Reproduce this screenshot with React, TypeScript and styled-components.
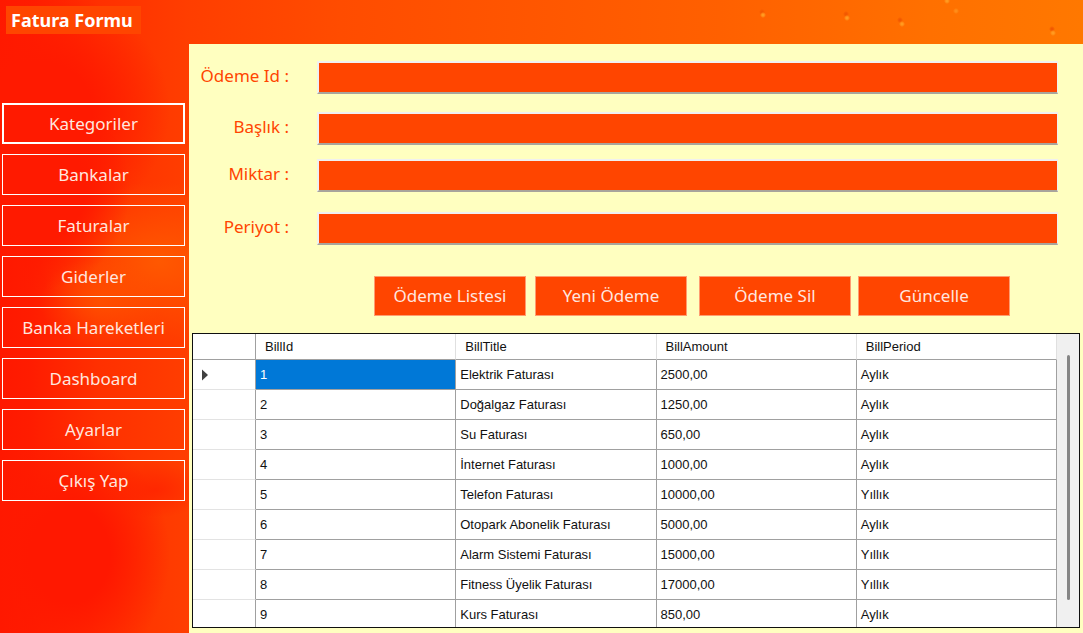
import React from 'react';
import styled, { createGlobalStyle } from 'styled-components';

const uiFont = '"Noto Sans", "Open Sans", sans-serif';

const GlobalStyle = createGlobalStyle`
  *, *::before, *::after { box-sizing: border-box; }
  body { margin: 0; font-family: ${uiFont}; }
`;

const Window = styled.div`
  height: 100vh;
  min-height: 480px;
  display: flex;
  flex-direction: column;
  overflow: hidden;
  background:
    radial-gradient(circle at 763px 15px, #ff9a20 0 1px, transparent 3px),
    radial-gradient(circle at 847px 18px, #ff9a20 0 1px, transparent 3px),
    radial-gradient(circle at 902px 24px, #ff9a20 0 1px, transparent 3px),
    radial-gradient(circle at 947px 1px, #ff9a20 0 1px, transparent 3px),
    radial-gradient(circle at 956px 11px, #ff8c18 0 1px, transparent 3px),
    radial-gradient(circle at 1053px 33px, #ff9a20 0 1px, transparent 3px),
    radial-gradient(circle at 762px 12px, #f25800 0 1px, transparent 3px),
    radial-gradient(circle at 846px 14px, #f25800 0 1px, transparent 3px),
    radial-gradient(circle at 900px 20px, #f25800 0 1px, transparent 3px),
    radial-gradient(circle at 1052px 29px, #f25800 0 1px, transparent 3px),
    radial-gradient(ellipse 50px 28px at 155px 490px, #ff1f00b0, #ff1f0000),
    radial-gradient(ellipse 100px 120px at 70px 555px, #ff1800 40%, #ff180000),
    radial-gradient(ellipse 90px 100px at 40px 190px, #ff1a00 50%, #ff1a0000),
    radial-gradient(ellipse 60px 45px at 100px 302px, #ff5600b0, #ff560000),
    radial-gradient(ellipse 120px 80px at 160px 262px, #ff5800, #ff580000),
    radial-gradient(ellipse 130px 120px at 40px 110px, #ff1a00 40%, #ff1a0000),
    linear-gradient(90deg, #ff1800 0, #ff1c00 30px, #ff3000 100px, #ff3e00 190px, #ff4c00 340px, #ff6000 720px, #ff7000 930px, #ff7800 1083px);
`;

const Header = styled.header`
  flex: none;
  height: 44px;
  padding: 6px;
`;

const Title = styled.h1`
  width: fit-content;
  margin: 0;
  padding: 0 8px 0 5px;
  background: #ff4500;
  color: #fff;
  font-size: 18px;
  line-height: 28px;
  font-weight: 700;
`;

const Body = styled.div`
  flex: 1;
  min-height: 0;
  display: flex;
`;

const Sidebar = styled.nav`
  flex: none;
  width: 189px;
  padding: 59px 4px 0 2px;
  display: flex;
  flex-direction: column;
  gap: 10px;
`;

const NavButton = styled.button<{ $active?: boolean }>`
  height: 41px;
  padding: 0;
  border: ${({ $active }) => ($active ? 2 : 1)}px solid #fff;
  background: transparent;
  color: #ffe6df;
  font: 17px/24px ${uiFont};
`;

const Panel = styled.main`
  flex: 1;
  min-width: 0;
  display: flex;
  flex-direction: column;
  padding: 17px 3px 5px;
  background: #ffffc0;
`;

const Form = styled.form`
  flex: none;
`;

const Fields = styled.div`
  display: grid;
  grid-template-columns: 97px 1fr;
  grid-template-rows: 51px 47px 53px 33px;
  column-gap: 28px;
  align-items: start;
  padding-right: 22px;
`;

const Label = styled.label`
  text-align: right;
  color: #ff4500;
  font-size: 17px;
  line-height: 30px;
`;

const Input = styled.input`
  width: 100%;
  height: 33px;
  padding: 4px 8px;
  border: 2px solid #f0f0f0;
  border-right-width: 1px;
  border-bottom: 2px solid #a8a49c;
  background: #ff4500;
  color: #fff;
  font: 17px/24px ${uiFont};
  outline: none;
`;

const Actions = styled.div`
  display: grid;
  grid-template-columns: 161px 164px 159px 152px;
  justify-content: end;
  padding: 31px 70px 0 0;
  margin-bottom: 17px;
`;

const ActionButton = styled.button`
  width: 152px;
  height: 40px;
  padding: 0;
  border: 1px solid #ff9c70;
  background: #ff4500;
  color: #ffe6df;
  font: 17px/24px ${uiFont};
`;

const Grid = styled.section`
  flex: 1;
  min-height: 0;
  display: flex;
  overflow: hidden;
  border: 1px solid #101010;
  background: #f0f0f0;
`;

const TableArea = styled.div`
  flex: 1;
  min-width: 0;
  overflow: hidden;
`;

const Table = styled.table`
  width: 100%;
  table-layout: fixed;
  border-collapse: separate;
  border-spacing: 0;
  background: #fff;
  color: #111;
  font: 13px/16px "Liberation Sans", Arial, sans-serif;
`;

const MarkerCol = styled.col`
  width: 63px;
`;

const HeadCell = styled.th`
  height: 26px;
  padding: 1px 9px 0;
  border-right: 1px solid #e0e0e0;
  border-bottom: 1px solid #a0a0a0;
  text-align: left;
  font-weight: 400;

  &:first-child { border-right-color: #a0a0a0; }
`;

const RowHead = styled.td`
  height: 30px;
  padding: 1px 8px 0;
  border-right: 1px solid #a0a0a0;
  border-bottom: 1px solid #e3e3e3;

  svg { display: block; }
`;

const Cell = styled.td<{ $selected?: boolean }>`
  height: 30px;
  padding: 1px 4px 0;
  border-right: 1px solid #a0a0a0;
  border-bottom: 1px solid #a0a0a0;
  background: ${({ $selected }) => ($selected ? '#0078d7' : '#fff')};
  color: ${({ $selected }) => ($selected ? '#fff' : '#111')};
  white-space: nowrap;
`;

const ScrollTrack = styled.div`
  flex: none;
  width: 22px;
  padding: 21px 9px 27px 10px;
  display: flex;
`;

const ScrollThumb = styled.div`
  flex: 1;
  border-radius: 2px;
  background: #858585;
`;

const menu = ['Kategoriler', 'Bankalar', 'Faturalar', 'Giderler', 'Banka Hareketleri', 'Dashboard', 'Ayarlar', 'Çıkış Yap'];

const fields = [
  { id: 'bill-id', label: 'Ödeme Id :' },
  { id: 'bill-title', label: 'Başlık :' },
  { id: 'bill-amount', label: 'Miktar :' },
  { id: 'bill-period', label: 'Periyot :' },
];

const actions = ['Ödeme Listesi', 'Yeni Ödeme', 'Ödeme Sil', 'Güncelle'];

const columns = ['BillId', 'BillTitle', 'BillAmount', 'BillPeriod'];

const bills = [
  ['1', 'Elektrik Faturası', '2500,00', 'Aylık'],
  ['2', 'Doğalgaz Faturası', '1250,00', 'Aylık'],
  ['3', 'Su Faturası', '650,00', 'Aylık'],
  ['4', 'İnternet Faturası', '1000,00', 'Aylık'],
  ['5', 'Telefon Faturası', '10000,00', 'Yıllık'],
  ['6', 'Otopark Abonelik Faturası', '5000,00', 'Aylık'],
  ['7', 'Alarm Sistemi Faturası', '15000,00', 'Yıllık'],
  ['8', 'Fitness Üyelik Faturası', '17000,00', 'Yıllık'],
  ['9', 'Kurs Faturası', '850,00', 'Aylık'],
];

export default function App() {
  return (
    <Window lang="tr">
      <GlobalStyle />
      <Header>
        <Title>Fatura Formu</Title>
      </Header>
      <Body>
        <Sidebar>
          {menu.map((item, i) => (
            <NavButton key={item} type="button" $active={i === 0}>{item}</NavButton>
          ))}
        </Sidebar>
        <Panel>
          <Form>
            <Fields>
              {fields.map(({ id, label }) => (
                <React.Fragment key={id}>
                  <Label htmlFor={id}>{label}</Label>
                  <Input id={id} type="text" />
                </React.Fragment>
              ))}
            </Fields>
            <Actions>
              {actions.map((action) => (
                <ActionButton key={action} type="button">{action}</ActionButton>
              ))}
            </Actions>
          </Form>
          <Grid>
            <TableArea>
              <Table>
                <colgroup>
                  <MarkerCol />
                  {columns.map((c) => <col key={c} />)}
                </colgroup>
                <thead>
                  <tr>
                    <HeadCell />
                    {columns.map((c) => <HeadCell key={c} scope="col">{c}</HeadCell>)}
                  </tr>
                </thead>
                <tbody>
                  {bills.map((bill, r) => (
                    <tr key={bill[0]}>
                      <RowHead>
                        {r === 0 && (
                          <svg width="8" height="12" viewBox="0 0 8 12" aria-hidden="true">
                            <path d="M1 0.5 7 6 1 11.5Z" fill="#404040" />
                          </svg>
                        )}
                      </RowHead>
                      {bill.map((value, c) => (
                        <Cell key={columns[c]} $selected={r === 0 && c === 0}>{value}</Cell>
                      ))}
                    </tr>
                  ))}
                </tbody>
              </Table>
            </TableArea>
            <ScrollTrack>
              <ScrollThumb />
            </ScrollTrack>
          </Grid>
        </Panel>
      </Body>
    </Window>
  );
}
